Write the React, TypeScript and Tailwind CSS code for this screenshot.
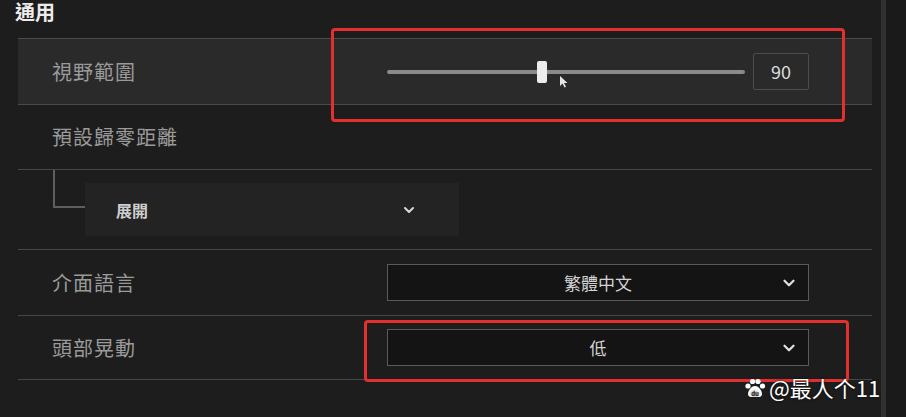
import { ChevronDown } from "lucide-react";

const font = { fontFamily: '"Noto Sans CJK TC", "Noto Sans", sans-serif' };

const Label = ({ children }: { children: React.ReactNode }) => (
  <div className="w-[335px] pl-[34px] text-[20px] tracking-[1px] text-[#9a9a9a]">
    {children}
  </div>
);

const Select = ({ value }: { value: string }) => (
  <div className="relative flex h-[37px] w-[422px] items-center justify-center border border-[#5a5a5a] bg-[#141414] text-[17px] text-[#d4d4d4]">
    {value}
    <ChevronDown
      className="absolute right-[10px] top-[9px] h-[18px] w-[18px] text-[#e0e0e0]"
      strokeWidth={3}
    />
  </div>
);

const Slider = ({ value, min, max }: { value: number; min: number; max: number }) => {
  const pct = ((value - min) / (max - min)) * 100;
  return (
    <div className="flex items-center gap-[8px]">
      <div className="relative h-[22px] w-[358px]">
        <div className="absolute left-0 right-0 top-[9px] h-[4px] rounded-full bg-[#8a8a8a]" />
        <div
          className="absolute top-0 h-[22px] w-[10px] rounded-[2px] bg-[#ececec]"
          style={{ left: `${pct}%` }}
        />
        {/* mouse pointer resting next to the thumb */}
        <svg
          className="absolute left-[172px] top-[14px]"
          width="10"
          height="13"
          viewBox="0 0 10 13"
        >
          <path d="M1 1 L1 11 L3.5 8.5 L5.5 12.5 L7 11.8 L5 8 L8.5 8 Z" fill="#e6e6e6" />
        </svg>
      </div>
      <div className="flex h-[37px] w-[56px] items-center justify-center rounded-[2px] border border-[#4c4c4c] text-[18px] text-[#dcdcdc]">
        {value}
      </div>
    </div>
  );
};

export default function App() {
  return (
    <div
      className="relative flex h-[417px] w-[906px] overflow-hidden bg-[#1d1d1d]"
      style={font}
    >
      <div className="flex w-[881px] flex-col pl-[15px] pr-[9px]">
        <div className="h-[38px] text-[20px] font-bold leading-[24px] text-[#ececec]">通用</div>

        <div className="ml-[3px] flex flex-col">
          <div className="flex h-[67px] items-center border-y border-[#4a4a4a] bg-[#2a2a2a]">
            <Label>視野範圍</Label>
            <div className="ml-[34px]">
              <Slider value={90} min={61} max={130} />
            </div>
          </div>

          <div className="flex h-[65px] items-center border-b border-[#474747]">
            <Label>預設歸零距離</Label>
          </div>

          {/* nested option under 預設歸零距離 */}
          <div className="flex h-[80px] border-b border-[#474747]">
            <div className="ml-[35px] h-[38px] w-[32px] border-b-2 border-l-2 border-[#5e5e5e]" />
            <div className="mt-[13px] flex h-[53px] w-[374px] items-center justify-between bg-[#232323] pl-[31px] pr-[42px]">
              <span className="text-[16px] font-bold text-[#cfcfcf]">展開</span>
              <ChevronDown className="h-[16px] w-[16px] text-[#d8d8d8]" strokeWidth={3} />
            </div>
          </div>

          <div className="flex h-[66px] items-center border-b border-[#474747]">
            <Label>介面語言</Label>
            <div className="ml-[34px]">
              <Select value="繁體中文" />
            </div>
          </div>

          <div className="flex h-[64px] items-center border-b border-[#474747]">
            <Label>頭部晃動</Label>
            <div className="ml-[34px]">
              <Select value="低" />
            </div>
          </div>
        </div>
      </div>

      {/* scrollbar track */}
      <div className="w-[5px] bg-[#303030]" />
      <div className="flex-1 bg-[#1a1a1a]" />

      {/* highlight frames */}
      <div className="absolute left-[331px] top-[28px] h-[94px] w-[514px] rounded-[4px] border-[3px] border-[#e3302e]" />
      <div className="absolute left-[364px] top-[320px] h-[62px] w-[485px] rounded-[4px] border-[3px] border-[#e3302e]" />

      {/* watermark */}
      <div className="absolute left-[744px] top-[371px] flex items-center gap-[3px] text-[22px] text-white [text-shadow:0_0_3px_rgba(0,0,0,0.8)]">
        <svg width="22" height="20" viewBox="0 0 22 20">
          <circle cx="4" cy="8" r="2.6" fill="#fff" />
          <circle cx="8.5" cy="3.5" r="2.6" fill="#fff" />
          <circle cx="14" cy="3.5" r="2.6" fill="#fff" />
          <circle cx="18.5" cy="8" r="2.6" fill="#fff" />
          <path d="M11 8 C7 8 4 13 4 16 C4 18.5 6 19 8 19 L14 19 C16 19 18 18.5 18 16 C18 13 15 8 11 8 Z" fill="#fff" />
          <text x="11" y="17.5" fontSize="6" textAnchor="middle" fill="#1d1d1d" fontWeight="bold">du</text>
        </svg>
        <span>@最人个11</span>
      </div>
    </div>
  );
}
